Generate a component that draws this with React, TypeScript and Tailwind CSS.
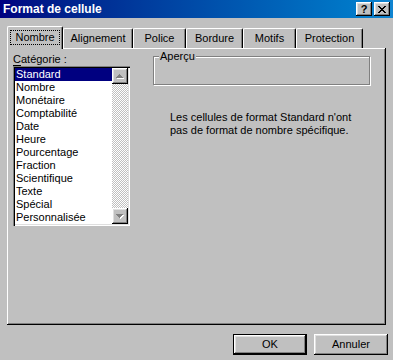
import React from "react";

const raised =
  "shadow-[inset_-1px_-1px_#000000,inset_1px_1px_#ffffff,inset_-2px_-2px_#808080,inset_2px_2px_#dfdfdf]";

function CloseGlyph() {
  const rows: [number, number][][] = [
    [[0, 2], [6, 2]],
    [[1, 2], [5, 2]],
    [[2, 4]],
    [[3, 2]],
    [[2, 4]],
    [[1, 2], [5, 2]],
    [[0, 2], [6, 2]],
  ];
  return (
    <svg width="8" height="7" viewBox="0 0 8 7" shapeRendering="crispEdges">
      {rows.map((r, y) =>
        r.map(([x, w], i) => <rect key={`${y}-${i}`} x={x} y={y} width={w} height={1} fill="#000" />)
      )}
    </svg>
  );
}

function Arrow({ down }: { down?: boolean }) {
  const rows: [number, number][] = [
    [3, 1],
    [2, 3],
    [1, 5],
    [0, 7],
  ];
  const r = down ? [...rows].reverse() : rows;
  return (
    <svg width="8" height="5" viewBox="0 0 8 5" shapeRendering="crispEdges">
      {r.map(([x, w], y) => (
        <rect key={`w${y}`} x={x + 1} y={y + 1} width={w} height={1} fill="#ffffff" />
      ))}
      {r.map(([x, w], y) => (
        <rect key={`g${y}`} x={x} y={y} width={w} height={1} fill="#808080" />
      ))}
    </svg>
  );
}

function Dither() {
  return (
    <svg width="16" height="124" className="block" shapeRendering="crispEdges">
      <defs>
        <pattern id="dither" width="2" height="2" patternUnits="userSpaceOnUse">
          <rect x="0" y="0" width="2" height="2" fill="#c0c0c0" />
          <rect x="0" y="0" width="1" height="1" fill="#ffffff" />
          <rect x="1" y="1" width="1" height="1" fill="#ffffff" />
        </pattern>
      </defs>
      <rect x="0" y="0" width="16" height="124" fill="url(#dither)" />
    </svg>
  );
}

const items = [
  "Standard",
  "Nombre",
  "Monétaire",
  "Comptabilité",
  "Date",
  "Heure",
  "Pourcentage",
  "Fraction",
  "Scientifique",
  "Texte",
  "Spécial",
  "Personnalisée",
];

const tabs: { label: string; w: string }[] = [
  { label: "Alignement", w: "w-[70px]" },
  { label: "Police", w: "w-[53px]" },
  { label: "Bordure", w: "w-[57px]" },
  { label: "Motifs", w: "w-[53px]" },
  { label: "Protection", w: "w-[67px]" },
];

export default function App() {
  return (
    <div className="w-[393px] h-[360px] overflow-hidden bg-[#c0c0c0] font-['Liberation_Sans',Arial,sans-serif] text-[11px] leading-[13px] text-black flex flex-col">
      {/* Title bar */}
      <div className="h-[18px] shrink-0 flex items-center pl-[3px] pr-[3px] bg-linear-to-r from-[#000080] to-[#1084d0]">
        <span className="flex-1 text-white font-bold text-[12px] leading-[14px]">Format de cellule</span>
        <div className="flex gap-[2px]">
          <div className={`w-[16px] h-[14px] bg-[#c0c0c0] ${raised} flex items-center justify-center font-bold text-[11px] leading-[11px] pt-[1px]`}>
            ?
          </div>
          <div className={`w-[16px] h-[14px] bg-[#c0c0c0] ${raised} flex items-center justify-center`}>
            <CloseGlyph />
          </div>
        </div>
      </div>

      {/* Tabs */}
      <div className="mt-[8px] ml-[7px] h-[22px] flex items-end relative z-10">
        <div className="w-[56px] h-[23px] -mb-[1px] bg-[#c0c0c0] border-t border-l border-r border-t-white border-l-white border-r-black rounded-t-[2px] shadow-[inset_-1px_0_#808080] flex items-center justify-center pb-[1px]">
          <span className="h-[15px] border border-dotted border-black px-[4px] flex items-center">Nombre</span>
        </div>
        {tabs.map((t) => (
          <div
            key={t.label}
            className={`${t.w} h-[20px] bg-[#c0c0c0] border-t border-l border-r border-t-white border-l-white border-r-black rounded-t-[2px] shadow-[inset_-1px_0_#808080] flex items-center justify-center`}
          >
            {t.label}
          </div>
        ))}
      </div>

      {/* Panel */}
      <div className="ml-[7px] w-[379px] h-[277px] shrink-0 bg-[#c0c0c0] shadow-[inset_-1px_-1px_#000000,inset_1px_1px_#ffffff,inset_-2px_-2px_#808080] flex pt-[5px] pl-[6px]">
        <div className="w-[117px] flex flex-col">
          <div className="h-[13px]">
            <span className="underline underline-offset-[2px]">C</span>atégorie :
          </div>
          <div className="h-[160px] p-[2px] bg-white shadow-[inset_1px_1px_#808080,inset_2px_2px_#000000,inset_-1px_-1px_#ffffff,inset_-2px_-2px_#dfdfdf] flex">
            <div className="flex-1 flex flex-col">
              {items.map((it, i) => (
                <div
                  key={it}
                  className={`h-[13px] pl-[1px] whitespace-nowrap ${i === 0 ? "bg-[#000080] text-white" : ""}`}
                >
                  {it}
                </div>
              ))}
            </div>
            <div className="w-[16px] flex flex-col">
              <div className={`h-[16px] bg-[#c0c0c0] ${raised} flex items-center justify-center`}>
                <Arrow />
              </div>
              <div className="h-[124px]">
                <Dither />
              </div>
              <div className={`h-[16px] bg-[#c0c0c0] ${raised} flex items-center justify-center`}>
                <Arrow down />
              </div>
            </div>
          </div>
        </div>

        <div className="ml-[23px] mt-[3px] flex flex-col">
          <div className="relative w-[217px] h-[29px] border border-[#808080] shadow-[inset_1px_1px_#ffffff,1px_1px_#ffffff]">
            <span className="absolute left-[5px] -top-[7px] px-[1px] bg-[#c0c0c0]">Aperçu</span>
          </div>
          <div className="mt-[26px] pl-[17px] whitespace-nowrap">
            <div>Les cellules de format Standard n'ont</div>
            <div>pas de format de nombre spécifique.</div>
          </div>
        </div>
      </div>

      {/* Buttons */}
      <div className="mt-[9px] flex justify-end gap-[7px] pr-[5px]">
        <div className={`w-[74px] h-[21px] border border-black bg-[#c0c0c0] ${raised} flex items-center justify-center`}>
          OK
        </div>
        <div className={`w-[74px] h-[21px] bg-[#c0c0c0] ${raised} flex items-center justify-center`}>
          Annuler
        </div>
      </div>
    </div>
  );
}
